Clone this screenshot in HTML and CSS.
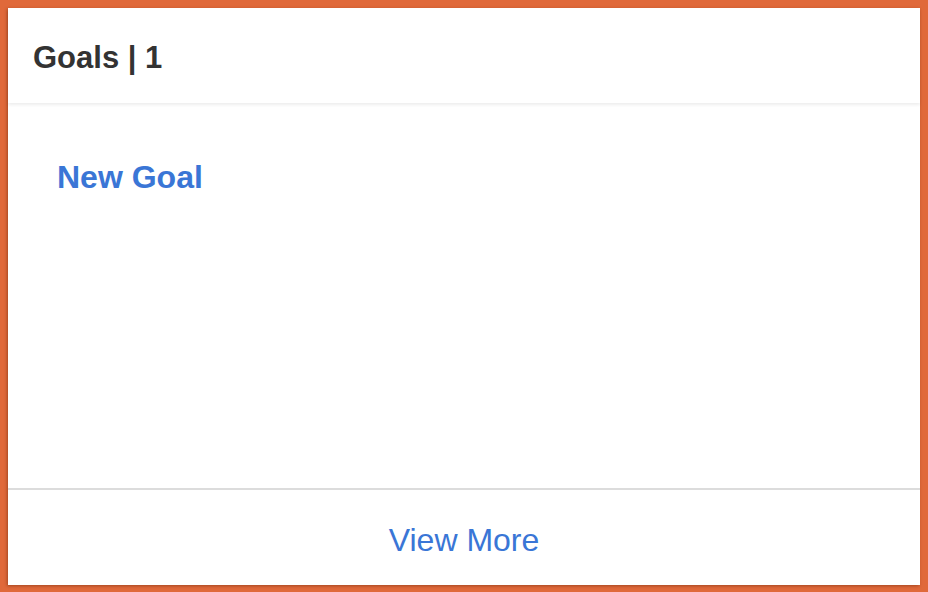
FILE: index.html
```html
<!DOCTYPE html>
<html>
<head>
<meta charset="utf-8">
<link rel="stylesheet" href="styles.css">
</head>
<body>
<div class="card">
  <div class="card-header"><h2 class="title">Goals | 1</h2></div>
  <div class="card-body"><a class="new-goal">New Goal</a></div>
  <div class="card-footer"><a class="view-more">View More</a></div>
</div>
</body>
</html>
```
FILE: styles.css
```css
html, body { height: 100%; }
body {
  margin: 0;
  padding: 8px;
  box-sizing: border-box;
  background: #e0693a;
  font-family: "Liberation Sans", Arial, sans-serif;
}
.card {
  height: 577px;
  background: #fff;
  display: flex;
  flex-direction: column;
  box-shadow: -1px 1px 3px rgba(90, 30, 0, 0.45);
}
.card-header {
  height: 95px;
  box-sizing: border-box;
  display: flex;
  align-items: center;
  padding: 4px 0 0 25px;
  box-shadow: 0 2px 3px rgba(0, 0, 0, 0.07);
  position: relative;
}
.title {
  margin: 0;
  font-size: 31px;
  font-weight: 700;
  color: #333333;
}
.card-body {
  flex: 1;
  padding: 56px 49px 0;
}
.new-goal {
  font-size: 32px;
  font-weight: 700;
  color: #3a76d6;
}
.card-footer {
  border-top: 2px solid #dcdcdc;
  height: 97px;
  box-sizing: border-box;
  padding-top: 5px;
  flex: none;
  display: flex;
  align-items: center;
  justify-content: center;
}
.view-more {
  font-size: 32px;
  color: #3a76d6;
}
```
